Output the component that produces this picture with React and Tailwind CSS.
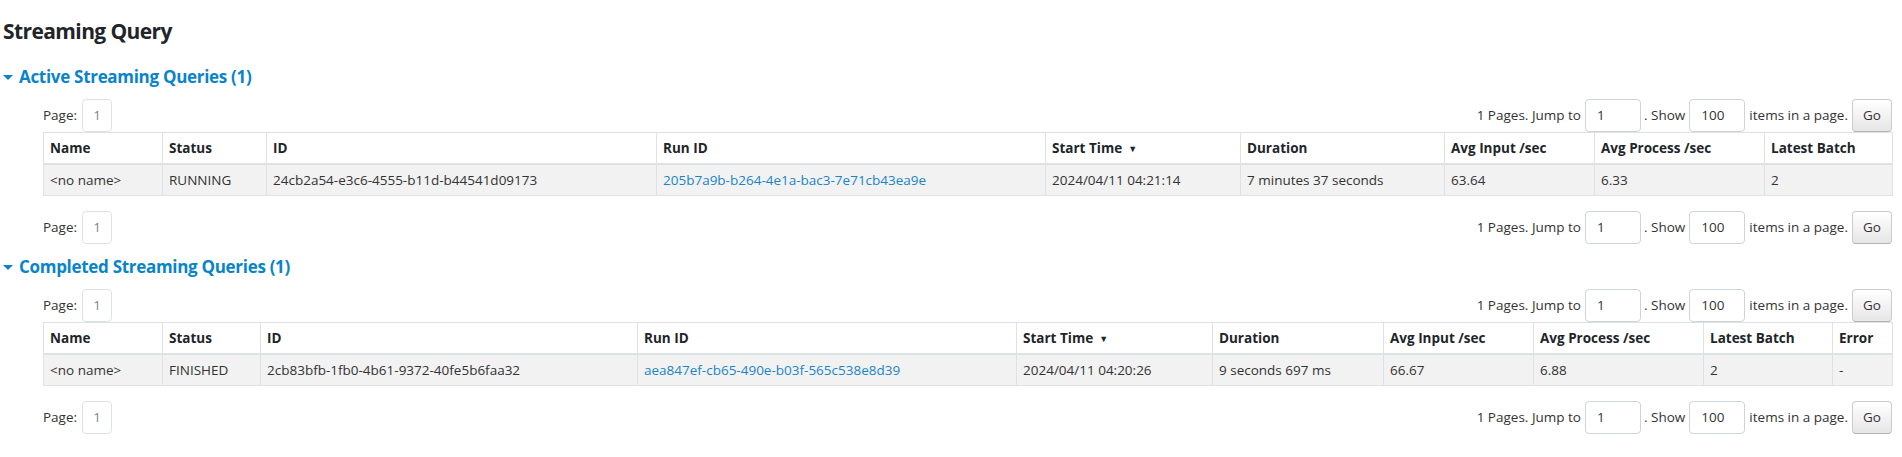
import React from "react";

const activeCols = [
  { label: "Name", w: "w-[119px]" },
  { label: "Status", w: "w-[104px]" },
  { label: "ID", w: "w-[390px]" },
  { label: "Run ID", w: "w-[389px]" },
  { label: "Start Time", w: "w-[195px]", sort: true },
  { label: "Duration", w: "w-[204px]" },
  { label: "Avg Input /sec", w: "w-[150px]" },
  { label: "Avg Process /sec", w: "w-[170px]" },
  { label: "Latest Batch", w: "w-[128px]" },
];

const activeRow = [
  "<no name>",
  "RUNNING",
  "24cb2a54-e3c6-4555-b11d-b44541d09173",
  { link: "205b7a9b-b264-4e1a-bac3-7e71cb43ea9e" },
  "2024/04/11 04:21:14",
  "7 minutes 37 seconds",
  "63.64",
  "6.33",
  "2",
];

const completedCols = [
  { label: "Name", w: "w-[119px]" },
  { label: "Status", w: "w-[98px]" },
  { label: "ID", w: "w-[377px]" },
  { label: "Run ID", w: "w-[379px]" },
  { label: "Start Time", w: "w-[196px]", sort: true },
  { label: "Duration", w: "w-[171px]" },
  { label: "Avg Input /sec", w: "w-[150px]" },
  { label: "Avg Process /sec", w: "w-[170px]" },
  { label: "Latest Batch", w: "w-[129px]" },
  { label: "Error", w: "w-[60px]" },
];

const completedRow = [
  "<no name>",
  "FINISHED",
  "2cb83bfb-1fb0-4b61-9372-40fe5b6faa32",
  { link: "aea847ef-cb65-490e-b03f-565c538e8d39" },
  "2024/04/11 04:20:26",
  "9 seconds 697 ms",
  "66.67",
  "6.88",
  "2",
  "-",
];

function Pager() {
  return (
    <div className="flex h-[33px] items-center justify-between">
      <div className="flex items-center">
        <span>Page:</span>
        <span className="ml-[5px] flex h-[33px] w-[30px] items-center justify-center rounded-[4px] border border-[#dee2e6] text-[#7a8794]">
          1
        </span>
      </div>
      <div className="flex items-center">
        <span>1 Pages. Jump to</span>
        <div className="ml-[4px] flex h-[33px] w-[56px] items-center rounded-[4px] border border-[#ced4da] pl-[11px]">
          1
        </div>
        <span className="ml-[3px]">. Show</span>
        <div className="ml-[4px] flex h-[33px] w-[56px] items-center rounded-[4px] border border-[#ced4da] pl-[11px]">
          100
        </div>
        <span className="ml-[4px]">items in a page.</span>
        <button className="ml-[4px] flex h-[33px] w-[40px] items-center justify-center rounded-[4px] border border-[#cccccc] border-b-[#b3b3b3] bg-linear-to-b from-white to-[#e6e6e6] text-[#333]">
          Go
        </button>
      </div>
    </div>
  );
}

function DataTable({ cols, row }) {
  return (
    <table className="w-full table-fixed border-collapse">
      <colgroup>
        {cols.map((c) => (
          <col key={c.label} className={c.w} />
        ))}
      </colgroup>
      <thead>
        <tr className="bg-white">
          {cols.map((c) => (
            <th
              key={c.label}
              className="h-[31px] border border-b-2 border-[#dee2e6] px-[6px] text-left align-middle font-bold text-[#212529]"
            >
              {c.label}
              {c.sort && <span className="ml-[6px] text-[9px] align-[1px]">▼</span>}
            </th>
          ))}
        </tr>
      </thead>
      <tbody>
        <tr className="bg-[#f2f2f2]">
          {row.map((v, i) => (
            <td
              key={i}
              className="h-[32px] border border-[#dee2e6] px-[6px] align-middle"
            >
              {typeof v === "string" ? (
                v
              ) : (
                <span className="text-[#1a84c8]">{v.link}</span>
              )}
            </td>
          ))}
        </tr>
      </tbody>
    </table>
  );
}

function Section({ title, cols, row, first }) {
  return (
    <div className={first ? "mt-[20px]" : "mt-[12px]"}>
      <h4 className="flex h-[22px] items-center text-[17px] font-bold leading-[22px] tracking-[-0.3px] text-[#0a84c8]">
        <span className="mr-[6px] mt-[1px] inline-block h-0 w-0 border-x-[5px] border-t-[5px] border-x-transparent border-t-[#0a84c8]" />
        {title}
      </h4>
      <div className="ml-[40px] mt-[11px]">
        <Pager />
        <DataTable cols={cols} row={row} />
        <div className="mt-[15px]">
          <Pager />
        </div>
      </div>
    </div>
  );
}

export default function App() {
  return (
    <div className="min-h-[457px] bg-white pl-[3px] pr-[10px] font-['Open_Sans',sans-serif] text-[13.5px] text-[#333]">
      <h3 className="pt-[17px] text-[21px] font-bold leading-[29px] tracking-[-0.6px] text-[#212529]">
        Streaming Query
      </h3>
      <Section
        first
        title="Active Streaming Queries (1)"
        cols={activeCols}
        row={activeRow}
      />
      <Section
        title="Completed Streaming Queries (1)"
        cols={completedCols}
        row={completedRow}
      />
    </div>
  );
}
